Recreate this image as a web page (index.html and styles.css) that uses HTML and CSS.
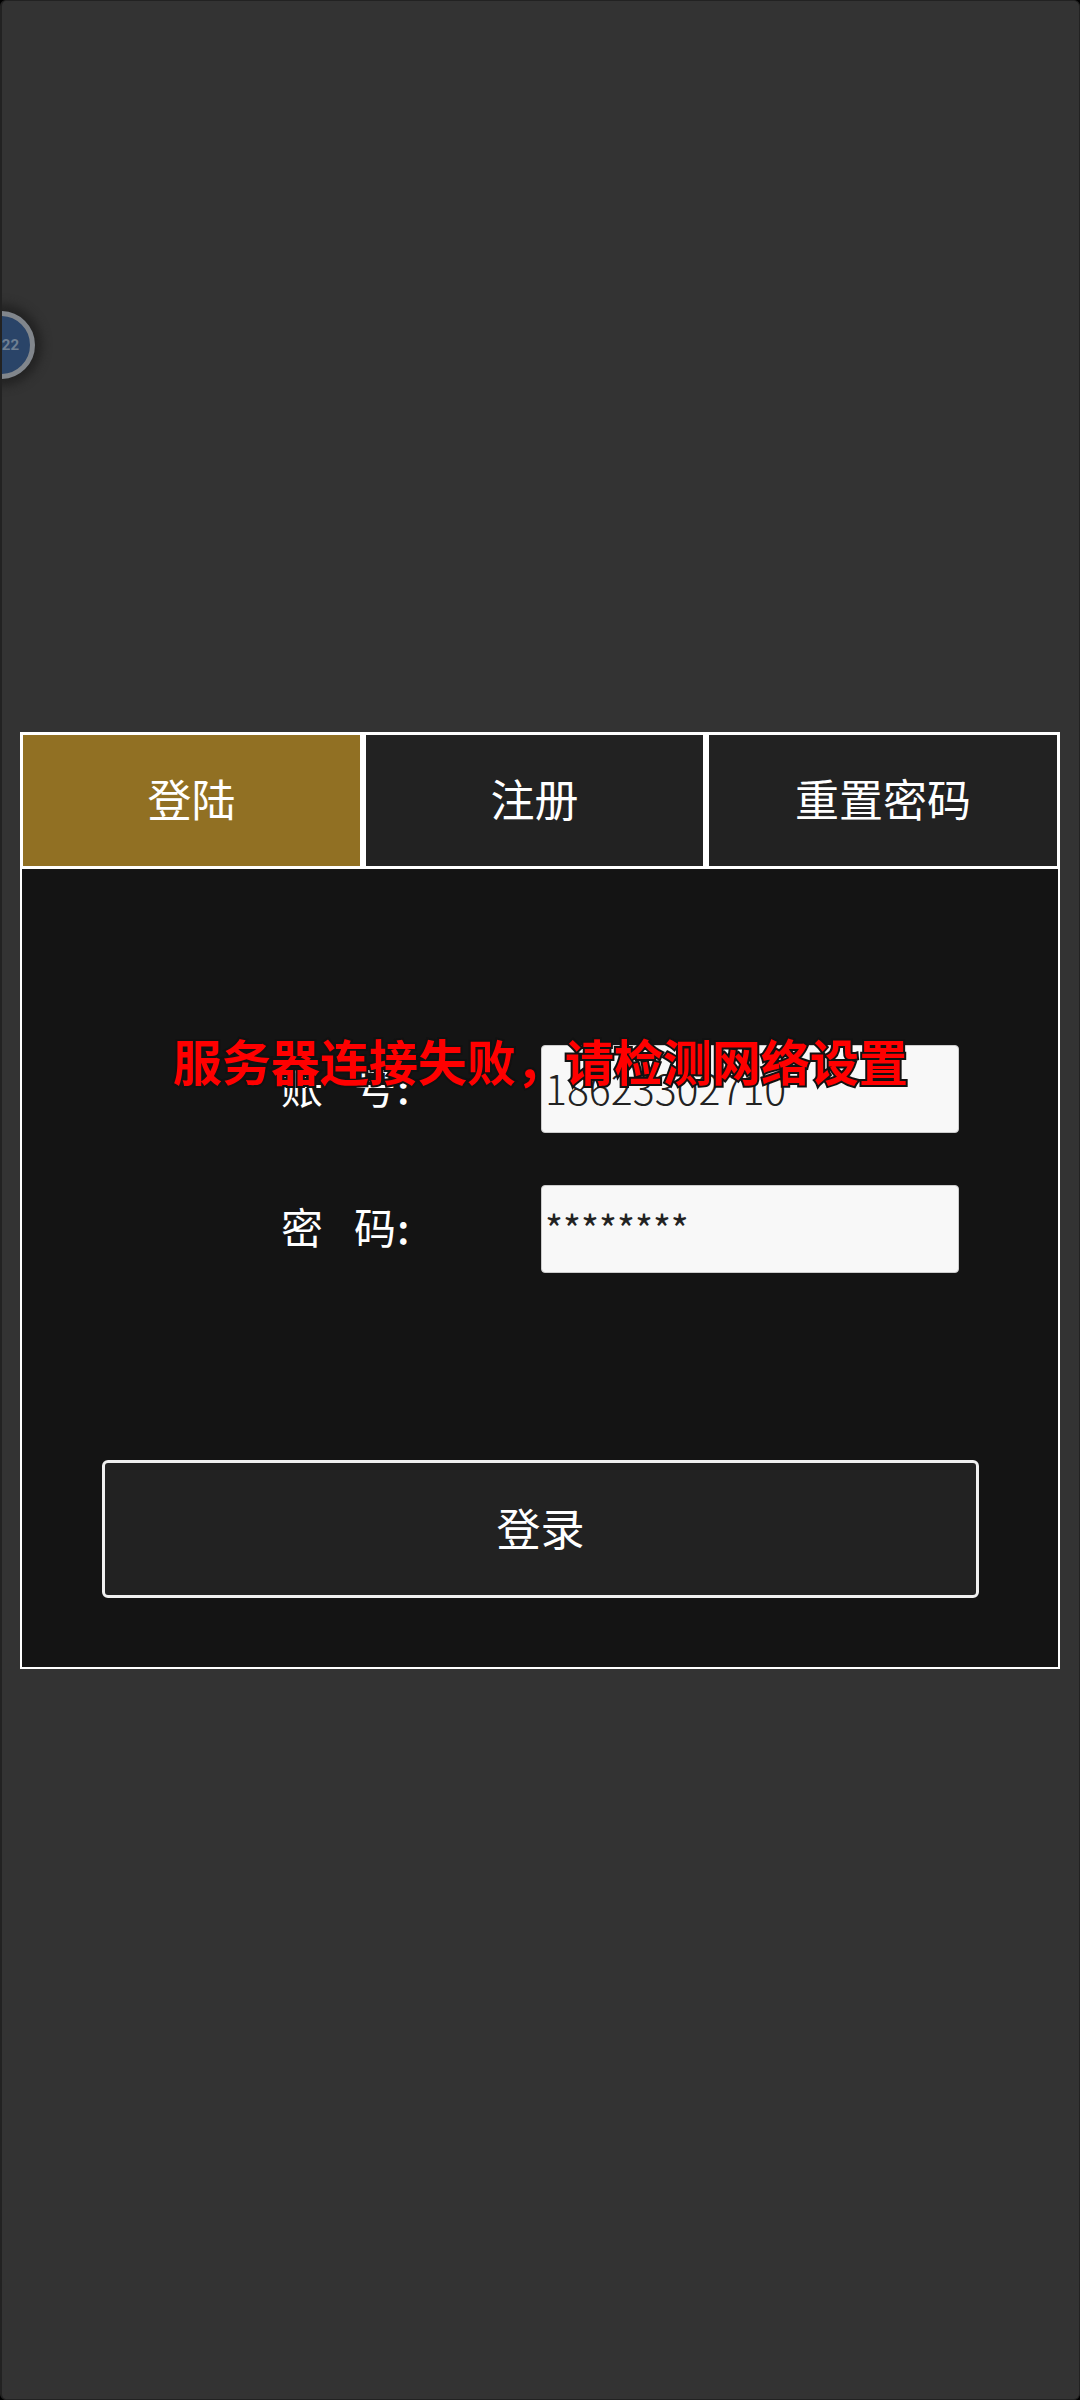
FILE: index.html
```html
<!DOCTYPE html>
<html lang="zh-CN">
<head>
<meta charset="utf-8">
<title>登陆</title>
<link rel="stylesheet" href="styles.css">
</head>
<body>
<div class="screen">
  <div class="float-ball"><span class="float-text">22</span></div>
  <div class="panel">
    <div class="tabs">
      <div class="tab tab-active">登陆</div>
      <div class="tab">注册</div>
      <div class="tab">重置密码</div>
    </div>
    <div class="form">
      <div class="row">
        <div class="label">账<span class="label-gap"></span>号<span class="label-colon">:</span></div>
        <div class="field">18623302710</div>
      </div>
      <div class="row">
        <div class="label">密<span class="label-gap"></span>码<span class="label-colon">:</span></div>
        <div class="field field-secret">********</div>
      </div>
      <div class="submit">登录</div>
    </div>
  </div>
  <div class="toast">服务器连接失败，请检测网络设置</div>
</div>
</body>
</html>
```
FILE: styles.css
```css
* { box-sizing: border-box; }
html, body { margin: 0; padding: 0; background: #000; }
body { font-family: "Noto Sans CJK SC", "Noto Sans", sans-serif; }
.screen {
  position: relative;
  width: 1080px;
  height: 2400px;
  padding: 731px 19px 0 18px;
  background: #333;
  border: 1px solid #222;
  border-left-width: 2px;
  border-radius: 6px;
  overflow: hidden;
}
.float-ball {
  position: absolute;
  left: -35px;
  top: 310px;
  width: 68px;
  height: 68px;
  border-radius: 50%;
  background: #2a4468;
  border: 5px solid #81868c;
  box-shadow: 0 0 10px 7px #232323;
  display: flex;
  align-items: center;
  justify-content: flex-end;
  padding-right: 11px;
}
.float-text {
  font-family: Roboto, sans-serif;
  font-weight: 700;
  font-size: 15px;
  color: #6f7f92;
}
.panel { width: 1040px; }
.tabs {
  display: grid;
  grid-template-columns: 337px 337px 1fr;
  gap: 6px;
  height: 137px;
  padding: 3px;
  background: #fff;
}
.tab {
  display: flex;
  align-items: center;
  justify-content: center;
  padding-bottom: 5px;
  background: #222;
  color: #fff;
  font-size: 44px;
}
.tab-active { background: #917023; }
.form {
  height: 800px;
  padding: 176px 80px 0;
  background: #141414;
  border: 2px solid #fff;
  border-top: 0;
}
.row {
  display: flex;
  align-items: center;
  margin-bottom: 52px;
  padding-left: 179px;
}
.label {
  width: 260px;
  padding-bottom: 5px;
  color: #fff;
  font-size: 42px;
  line-height: 1.4;
}
.label-gap { display: inline-block; width: 31px; }
.label-colon { margin-left: 1px; font-weight: 500; }
.field {
  width: 418px;
  height: 88px;
  padding: 0 0 3px 3px;
  display: flex;
  align-items: center;
  background: #f8f8f8;
  border: 1px solid #ccc;
  border-radius: 4px;
  color: #222;
  font-size: 41px;
  font-weight: 300;
  line-height: 1;
}
.field-secret { font-size: 38.5px; font-weight: 400; }
.submit {
  display: flex;
  align-items: center;
  justify-content: center;
  width: 877px;
  height: 138px;
  margin-top: 187px;
  padding-bottom: 5px;
  background: #222;
  border: 3px solid #f0f0f0;
  border-radius: 6px;
  color: #fff;
  font-size: 44px;
}
.toast {
  position: absolute;
  left: 0;
  right: 0;
  top: 1024px;
  text-align: center;
  color: #f00;
  font-size: 49px;
  font-weight: 700;
  line-height: 70px;
  -webkit-text-stroke: 4px #111;
  paint-order: stroke fill;
}
```
